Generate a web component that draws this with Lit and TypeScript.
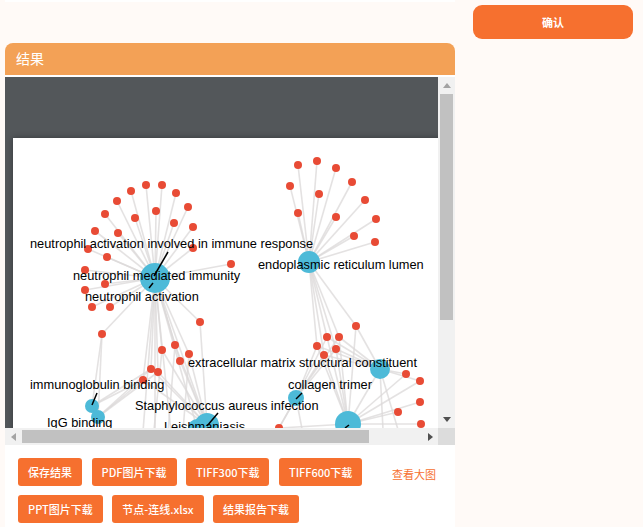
import { LitElement, html, css, svg } from "lit";
import { customElement } from "lit/decorators.js";

type P = [number, number];
const hubA: P = [155, 278];
const hubB: P = [309, 262];
const hubC: P = [380, 369];
const hubD: P = [348, 424];
const hubE: P = [296, 398];
const hubF: P = [92, 406];
const hubG: P = [98, 417];
const hubH: P = [207, 425];

const redA: P[] = [[131,191],[146,185],[162,185],[176,193],[188,207],[193,227],[193,248],[231,264],[105,214],[117,201],[95,231],[88,249],[85,270],[85,290],[92,307],[110,307],[135,218],[156,211],[174,223],[118,233],[107,257],[105,284],[102,334],[200,322],[162,350],[175,345],[189,354],[180,361],[151,369],[158,372],[143,380]];
const redB: P[] = [[298,165],[317,161],[336,168],[352,182],[365,200],[376,219],[375,242],[354,236],[336,217],[319,194],[290,186],[298,213],[356,326],[327,337],[339,337],[317,346],[336,349],[324,355]];
const redC: P[] = [[406,374],[420,381],[420,402],[398,412],[421,424]];
const cluster: P[] = [[327,337],[339,337],[317,346],[336,349],[324,355],[356,326]];
const lower: P[] = [[162,350],[175,345],[189,354],[180,361],[151,369],[158,372],[143,380]];

const edges: [P, P][] = [
  ...redA.map((r): [P, P] => [hubA, r]),
  ...redB.map((r): [P, P] => [hubB, r]),
  ...redC.map((r): [P, P] => [hubD, r]),
  ...cluster.map((r): [P, P] => [hubC, r]),
  ...cluster.map((r): [P, P] => [hubD, r]),
  ...cluster.slice(0, 5).map((r): [P, P] => [hubE, r]),
  [hubC, [406,374]], [hubC, [420,381]], [hubC, [385,470]], [hubC, [410,470]], [hubD, hubC],
  [hubA, hubH], [hubA, [197,428]], [hubA, [155,430]], [hubA, [140,470]], [hubA, [175,470]],
  [[102,334], hubF], [[102,334], hubG], [[200,322], hubH],
  [[143,380], hubF], [[151,369], hubF], [[158,372], hubG], [[143,380], hubG], [[151,369], hubG],
  ...lower.map((r): [P, P] => [r, hubH]),
  [[162,350],[150,470]], [[175,345],[165,470]], [[189,354],[180,470]],
  [hubE, [279,428]], [hubE, [255,470]], [hubE, [310,470]], [hubD, [279,428]],
  [hubD, [410,470]], [hubD,[440,470]],
];

const blues: [number, number, number][] = [
  [155,278,15],[309,262,11],[380,369,10],[348,424,13],[296,398,8],[92,406,7],[98,417,7],[207,425,12],[197,428,9],[155,431,3],
];

const labels: [string, number, number][] = [
  ["neutrophil activation involved in immune response",30,248],
  ["neutrophil mediated immunity",73,280],
  ["neutrophil activation",85,301],
  ["endoplasmic reticulum lumen",258,269],
  ["extracellular matrix structural constituent",188,367],
  ["immunoglobulin binding",30,389],
  ["collagen trimer",288,389],
  ["Staphylococcus aureus infection",135,410],
  ["IgG binding",47,427],
  ["Leishmaniasis",164,431],
];

const leaders: [number, number, number, number][] = [
  [168,252,154,276],[153,283,149,288],[97,393,92,405],[218,413,207,426],[302,393,296,399],[349,425,345,428],
];

const buttons = ["保存结果","PDF图片下载","TIFF300下载","TIFF600下载","PPT图片下载","节点-连线.xlsx","结果报告下载"];

@customElement("app-root")
export class AppRoot extends LitElement {
  static styles = css`
    :host { display: block; height: 527px; overflow: hidden; background: #fffaf7;
      font-family: "Liberation Sans", "Noto Sans CJK SC", sans-serif; }
    .page { display: flex; align-items: flex-start; padding-left: 5px; }
    .main { width: 450px; flex: none; }
    .strip { height: 2px; background: #fff; margin-bottom: 41px; }
    .head { height: 32px; background: #f3a156; border-radius: 8px 8px 0 0; color: #fff;
      font-size: 14px; line-height: 31px; padding-left: 11px; font-family: "Noto Sans CJK SC", sans-serif; }
    .body { background: #fff; padding-top: 2px; height: 450px; }
    .scroll { display: grid; grid-template-columns: 433px 17px; grid-template-rows: 351px 17px; }
    .view { overflow: hidden; background: #53575a; padding: 61px 0 0 8px; box-sizing: border-box; }
    .sheet { display: block; background: #fff; box-shadow: 0 0 6px rgba(0,0,0,.35); }
    .vbar { background: #f1f1f1; display: flex; flex-direction: column; align-items: center; justify-content: space-between; }
    .vbar .thumb { width: 13px; height: 226px; background: #c1c1c1; flex: none; }
    .hbar { background: #f1f1f1; display: flex; align-items: center; padding-left: 5px; }
    .hbar .thumb { height: 13px; width: 347px; background: #c1c1c1; flex: none; margin: 0 58px 0 5px; }
    .corner { background: #dcdcdc; }
    .arrow { flex: none; display: block; }
    .vtop { display: flex; flex-direction: column; align-items: center; padding-top: 5px; gap: 5px; }
    .vend { margin-bottom: 5px; }
    .acts { display: flex; align-items: flex-start; padding: 13px 0 0 13px; }
    .btns { display: flex; flex-wrap: wrap; gap: 9px 9.5px; width: 350px; flex: none; }
    .btn { height: 28px; line-height: 28px; padding: 0 10px; background: #f6702f; color: #fff; border-radius: 3px;
      font-size: 11px; font-weight: 500; font-family: "Noto Sans CJK SC", sans-serif; }
    .link { color: #f6702f; font-size: 11px; margin: 8px 0 0 24px; line-height: 16px; font-family: "Noto Sans CJK SC", sans-serif; }
    .side { width: 160px; flex: none; margin: 5px 0 0 18px; }
    .ok { height: 34px; line-height: 34px; text-align: center; background: #f6702f; color: #fff; border-radius: 9px;
      font-size: 11px; font-weight: 700; font-family: "Noto Sans CJK SC", sans-serif; }
  `;

  private tri(dir: "u" | "d" | "l" | "r", color: string) {
    const pts = { u: "0,6 4,1 8,6", d: "0,1 8,1 4,6", l: "6,0 6,8 1,4", r: "1,0 1,8 6,4" }[dir];
    const wh = dir === "u" || dir === "d" ? [8, 7] : [7, 8];
    return html`<svg class="arrow" width=${wh[0]} height=${wh[1]} viewBox="0 0 ${wh[0]} ${wh[1]}"><polygon points=${pts} fill=${color}></polygon></svg>`;
  }

  render() {
    return html`<div class="page">
      <div class="main">
        <div class="strip"></div>
        <div class="head">结果</div>
        <div class="body">
          <div class="scroll">
            <div class="view">
              <svg class="sheet" width="520" height="400" viewBox="13 138 520 400">
                ${edges.map(([a, b]) => svg`<line x1=${a[0]} y1=${a[1]} x2=${b[0]} y2=${b[1]} stroke="#dcd9d9" stroke-width="1.6" opacity=".75"></line>`)}
                ${[...redA, ...redB, ...redC, [279, 428] as P].map(([x, y]) => svg`<circle cx=${x} cy=${y} r="4" fill="#e84b35"></circle>`)}
                ${blues.map(([x, y, r]) => svg`<circle cx=${x} cy=${y} r=${r} fill="#4dbad8"></circle>`)}
                ${leaders.map(([a, b, c, d]) => svg`<line x1=${a} y1=${b} x2=${c} y2=${d} stroke="#000" stroke-width="1.5"></line>`)}
                ${labels.map(([t, x, y]) => svg`<text x=${x} y=${y} font-size="12.8" fill="#000" font-family="Liberation Sans, sans-serif">${t}</text>`)}
              </svg>
            </div>
            <div class="vbar">
              <div class="vtop">
                ${this.tri("u", "#a3a3a3")}
                <div class="thumb"></div>
              </div>
              <div class="vend">${this.tri("d", "#505050")}</div>
            </div>
            <div class="hbar">
              ${this.tri("l", "#a3a3a3")}
              <div class="thumb"></div>
              ${this.tri("r", "#505050")}
            </div>
            <div class="corner"></div>
          </div>
          <div class="acts">
            <div class="btns">${buttons.map((b) => html`<div class="btn">${b}</div>`)}</div>
            <div class="link">查看大图</div>
          </div>
        </div>
      </div>
      <div class="side"><div class="ok">确认</div></div>
    </div>`;
  }
}
